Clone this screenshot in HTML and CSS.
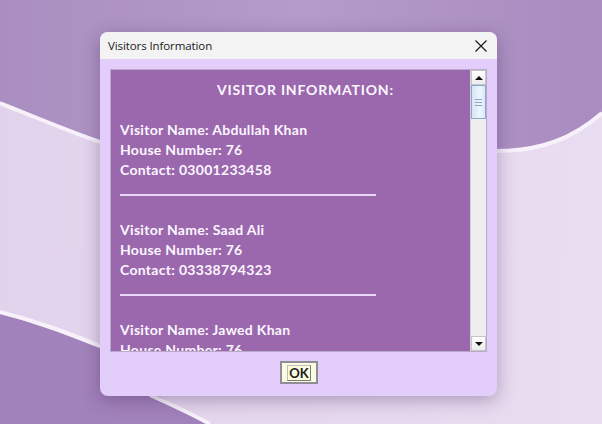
FILE: index.html
```html
<!DOCTYPE html>
<html>
<head>
<meta charset="utf-8">
<link rel="stylesheet" href="styles.css">
</head>
<body>
<svg class="wallpaper" width="602" height="424" viewBox="0 0 602 424">
  <defs>
    <linearGradient id="top" x1="0" y1="0" x2="1" y2="0">
      <stop offset="0" stop-color="#aa8ec1"/>
      <stop offset="0.5" stop-color="#b49bc9"/>
      <stop offset="1" stop-color="#a98cc0"/>
    </linearGradient>
    <linearGradient id="light" x1="0" y1="0" x2="1" y2="0">
      <stop offset="0" stop-color="#e2d3ec"/>
      <stop offset="1" stop-color="#e9ddf1"/>
    </linearGradient>
  </defs>
  <rect width="602" height="424" fill="url(#light)"/>
  <path d="M0 0 H602 V112 C572 138 548 150 506 150 L300 150 L100 142 C60 127 30 114 0 102 Z" fill="url(#top)"/>
  <path d="M0 103 C30 115 60 128 100 142" stroke="#f7f2fa" stroke-width="4" fill="none"/>
  <path d="M497 151 C540 151 572 139 602 113" stroke="#f7f2fa" stroke-width="4" fill="none"/>
  <path d="M0 314 C40 324 70 336 110 352 L150 392 C170 402 190 414 206 424 L0 424 Z" fill="#a282bb"/>
  <path d="M0 312 C40 322 70 334 100 346" stroke="#f7f2fa" stroke-width="4" fill="none"/>
  <path d="M150 395 C170 404 192 414 210 424" stroke="#f7f2fa" stroke-width="4" fill="none"/>
</svg>

<div class="dialog">
  <div class="titlebar">
    <span class="title">Visitors Information</span>
    <svg class="close" width="12" height="12" viewBox="0 0 12 12">
      <path d="M0.5 0.5 L11.5 11.5 M11.5 0.5 L0.5 11.5" stroke="#1a1a1a" stroke-width="1.2"/>
    </svg>
  </div>
  <div class="body">
    <div class="pane">
      <div class="textarea">
        <div class="line heading">VISITOR INFORMATION:</div>
        <div class="line"></div>
        <div class="line">Visitor Name: Abdullah Khan</div>
        <div class="line">House Number: 76</div>
        <div class="line">Contact: 03001233458</div>
        <div class="sep"></div>
        <div class="line"></div>
        <div class="line">Visitor Name: Saad Ali</div>
        <div class="line">House Number: 76</div>
        <div class="line">Contact: 03338794323</div>
        <div class="sep"></div>
        <div class="line"></div>
        <div class="line">Visitor Name: Jawed Khan</div>
        <div class="line">House Number: 76</div>
      </div>
      <div class="scrollbar">
        <div class="sb-btn"><span class="tri up"></span></div>
        <div class="thumb"><span class="grip"></span></div>
        <div class="track"></div>
        <div class="sb-btn"><span class="tri down"></span></div>
      </div>
    </div>
    <div class="actions">
      <button class="ok"><span class="ok-label">OK</span></button>
    </div>
  </div>
</div>
</body>
</html>
```

FILE: styles.css
```css
html, body {
  margin: 0;
  padding: 0;
}
body {
  width: 602px;
  height: 424px;
  overflow: hidden;
  position: relative;
  font-family: "Open Sans", "Noto Sans", sans-serif;
}
.wallpaper {
  position: absolute;
  left: 0;
  top: 0;
  display: block;
}
.dialog {
  position: absolute;
  left: 100px;
  top: 32px;
  width: 397px;
  height: 364px;
  border-radius: 8px;
  overflow: hidden;
  background: #e3cdfa;
  box-shadow: 0 4px 18px rgba(60, 30, 80, 0.35);
  display: flex;
  flex-direction: column;
}
.titlebar {
  height: 27px;
  flex: none;
  background: #f3f3f3;
  display: flex;
  align-items: center;
  justify-content: space-between;
  padding: 0 10px 0 8px;
}
.title {
  font-family: "Open Sans", "Noto Sans", sans-serif;
  font-size: 11.5px;
  color: #1a1a1a;
  letter-spacing: -0.1px;
}
.close {
  display: block;
}
.body {
  flex: 1;
  padding: 10px 10px 0 10px;
  display: flex;
  flex-direction: column;
}
.pane {
  height: 283px;
  flex: none;
  display: flex;
  border: 1px solid #b9a9c9;
  box-sizing: border-box;
}
.textarea {
  flex: 1;
  background: #9b68ae;
  overflow: hidden;
  padding: 10px 0 0 9px;
  color: #fbf6ff;
  font-family: Lato, "DejaVu Sans", sans-serif;
  font-weight: bold;
  font-size: 14px;
  letter-spacing: 0.3px;
}
.line {
  height: 20px;
  line-height: 20px;
  white-space: nowrap;
}
.heading {
  padding-left: 97px;
  letter-spacing: 0.8px;
}
.sep {
  height: 20px;
  padding-top: 14px;
  box-sizing: border-box;
}
.sep::after {
  content: "";
  display: block;
  width: 256px;
  height: 2px;
  background: #e9d6f8;
}
.scrollbar {
  width: 15px;
  flex: none;
  display: flex;
  flex-direction: column;
  background: #eeeeee;
  border-left: 1px solid #d4d4d4;
}
.sb-btn {
  height: 15px;
  flex: none;
  background: linear-gradient(#ffffff, #ececec);
  border: 1px solid #c6c6c6;
  box-sizing: border-box;
  display: flex;
  align-items: center;
  justify-content: center;
}
.tri {
  width: 0;
  height: 0;
  border-left: 4px solid transparent;
  border-right: 4px solid transparent;
}
.tri.up {
  border-bottom: 4px solid #111;
}
.tri.down {
  border-top: 4px solid #111;
}
.thumb {
  height: 34px;
  flex: none;
  background: linear-gradient(90deg, #d6e4f5, #eef5fd 60%, #dce8f6);
  border: 1px solid #88a8d0;
  box-sizing: border-box;
  display: flex;
  align-items: center;
  justify-content: center;
}
.grip {
  width: 7px;
  height: 5px;
  border-top: 1px solid #8aa6c8;
  border-bottom: 1px solid #8aa6c8;
  position: relative;
}
.grip::after {
  content: "";
  position: absolute;
  left: 0;
  right: 0;
  top: 2px;
  height: 1px;
  background: #8aa6c8;
}
.track {
  flex: 1;
}
.actions {
  display: flex;
  justify-content: center;
  padding-top: 9px;
}
.ok {
  width: 38px;
  height: 23px;
  margin-left: 1px;
  padding: 0;
  background: #fbfbdf;
  border: 2px solid #8e8e98;
  box-sizing: border-box;
  display: flex;
  align-items: center;
  justify-content: center;
  font-family: Lato, "DejaVu Sans", sans-serif;
  font-weight: bold;
  font-size: 13px;
  color: #1a1a1a;
}
.ok-label {
  border: 1px solid #7a7a7a;
  border-top-color: #bdbdbd;
  border-left-color: #bdbdbd;
  padding: 0 1px;
  line-height: 14px;
}
```
